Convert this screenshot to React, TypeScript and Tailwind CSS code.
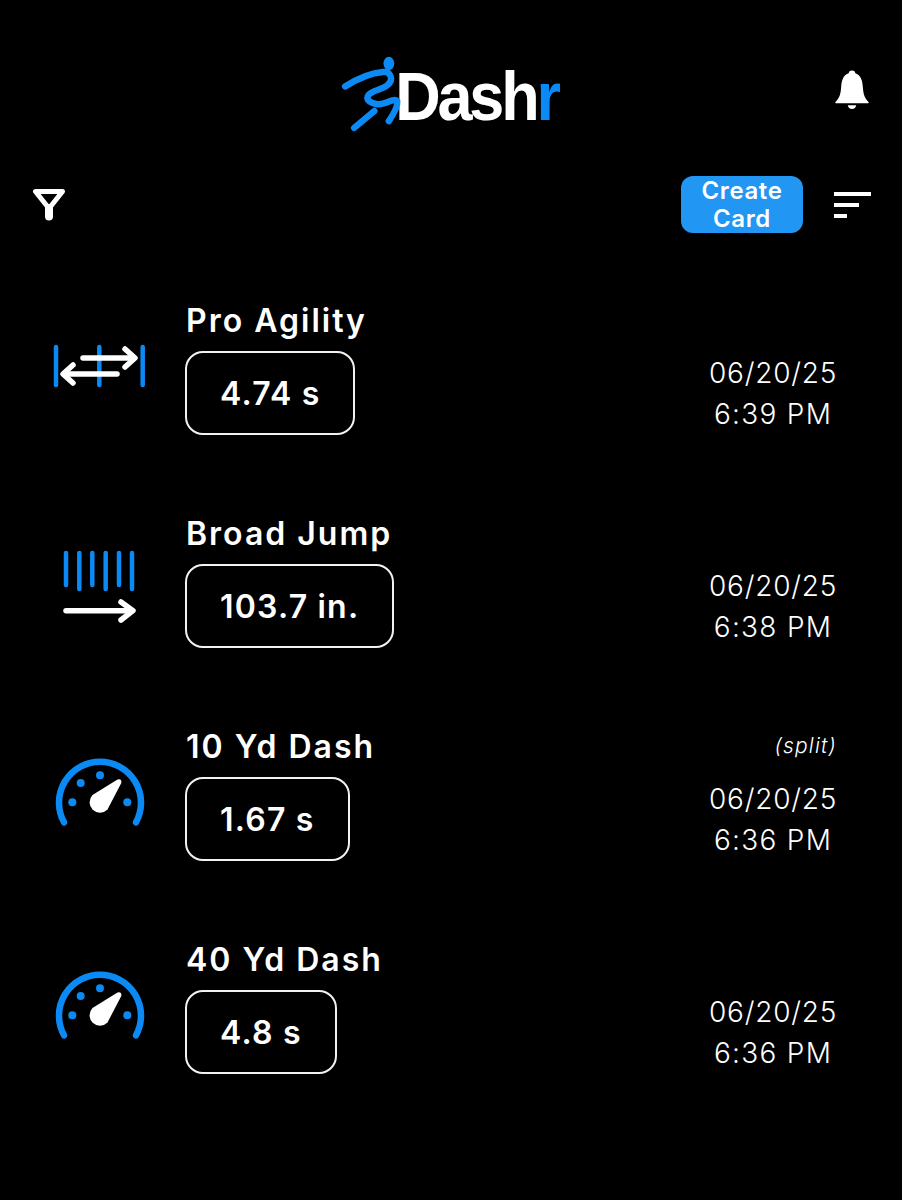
const inter = "font-['Inter',sans-serif]"

function AgilityIcon() {
  return (
    <svg width="96" height="96" viewBox="0 0 96 96" fill="none" strokeLinecap="round" strokeLinejoin="round">
      <g stroke="#0B8AF5" strokeWidth="4.5">
        <path d="M4 27V65" />
        <path d="M47.3 27V65" />
        <path d="M90.7 27V65" />
      </g>
      <g stroke="#fff" strokeWidth="5.5">
        <path d="M31 38H82" />
        <path d="M73 29L83 38L73 47" />
        <path d="M65 54H12" />
        <path d="M21 45L11 54L21 63" />
      </g>
    </svg>
  )
}

function JumpIcon() {
  return (
    <svg width="96" height="96" viewBox="0 0 96 96" fill="none" strokeLinecap="round" strokeLinejoin="round">
      <g stroke="#0B8AF5" strokeWidth="4.5">
        <path d="M14 20V52" />
        <path d="M27.3 20V56" />
        <path d="M40.3 20V52" />
        <path d="M53.7 20V56" />
        <path d="M67 20V52" />
        <path d="M80 20V56" />
      </g>
      <g stroke="#fff" strokeWidth="5.5">
        <path d="M14 77.7H80" />
        <path d="M69 69L81 77.7L69 87" />
      </g>
    </svg>
  )
}

function GaugeIcon() {
  return (
    <svg width="96" height="96" viewBox="0 0 96 96" fill="none">
      <path d="M12 76.3A41 41 0 1 1 84 76.3" stroke="#0B8AF5" strokeWidth="6.5" strokeLinecap="round" />
      <g fill="#0B8AF5">
        <circle cx="20.3" cy="56.3" r="4" />
        <circle cx="28.7" cy="37" r="4" />
        <circle cx="48" cy="29.3" r="4" />
        <circle cx="75.3" cy="56.3" r="4" />
      </g>
      <path d="M40.5 49L65.5 33.5Q70 32.5 69.3 37L55.5 63.5A10 10 0 0 1 40.5 49Z" fill="#fff" />
    </svg>
  )
}

function Logo() {
  return (
    <div className="flex items-center h-[76px] pr-[5px]">
      <svg width="64" height="76" viewBox="60 50 190 225" fill="none" stroke="#0B8AF5" strokeWidth="19" strokeLinecap="round" strokeLinejoin="round" className="relative z-10">
        <ellipse cx="208" cy="72" rx="16" ry="20" fill="#0B8AF5" stroke="none" />
        <path d="M78 140C110 120 150 100 190 97C215 95 222 120 205 135C190 150 160 150 148 165C138 178 150 190 175 193C200 195 222 172 233 184C235 200 220 225 208 243" />
        <path d="M105 263L165 213" />
      </svg>
      <span className="-ml-[8px] inline-block scale-y-[1.08] font-['Liberation_Sans',sans-serif] font-bold text-[63px] leading-none tracking-[-3.2px] text-white mt-[5px]">
        Dash<span className="text-[#0B8AF5]">r</span>
      </span>
    </div>
  )
}

function BellIcon() {
  return (
    <svg width="34" height="40" viewBox="0 0 36 42" fill="#fff" preserveAspectRatio="none">
      <circle cx="18" cy="4" r="3.5" />
      <path d="M18 3C9.5 3 7 10 6.5 18C6 25 5 29 .5 33.5C0 34.5 0.5 35 1.5 35H34.5C35.5 35 36 34.5 35.5 33.5C31 29 30 25 29.5 18C29 10 26.5 3 18 3Z" />
      <path d="M13.5 37H22.5C22 39.5 20.5 41 18 41C15.5 41 14 39.5 13.5 37Z" />
    </svg>
  )
}

function FilterIcon() {
  return (
    <svg width="34" height="34" viewBox="0 0 34 34" fill="none" stroke="#fff" strokeWidth="5" strokeLinejoin="round" strokeLinecap="round">
      <path d="M3.5 3.5H30.5L17 20.5Z" />
      <path d="M17 20V28.5" strokeWidth="8" />
    </svg>
  )
}

function SortIcon() {
  return (
    <div className="flex flex-col gap-[7px]">
      <div className="w-[37px] h-[4px] bg-white" />
      <div className="w-[25px] h-[4px] bg-white" />
      <div className="w-[13px] h-[4px] bg-white" />
    </div>
  )
}

type Result = {
  name: string
  value: string
  date: string
  time: string
  split?: boolean
  icon: React.ReactNode
}

const results: Result[] = [
  { name: 'Pro Agility', value: '4.74 s', date: '06/20/25', time: '6:39 PM', icon: <AgilityIcon /> },
  { name: 'Broad Jump', value: '103.7 in.', date: '06/20/25', time: '6:38 PM', icon: <JumpIcon /> },
  { name: '10 Yd Dash', value: '1.67 s', date: '06/20/25', time: '6:36 PM', split: true, icon: <GaugeIcon /> },
  { name: '40 Yd Dash', value: '4.8 s', date: '06/20/25', time: '6:36 PM', icon: <GaugeIcon /> },
]

function ResultRow({ result }: { result: Result }) {
  return (
    <div className="flex items-center pl-[52px] pr-[65px]">
      <div className="w-[96px] shrink-0">{result.icon}</div>
      <div className="ml-[37px] flex-1 flex flex-col items-start">
        <div className="h-[38px] pl-px text-[32px] leading-[40px] font-semibold tracking-[2px] text-white">{result.name}</div>
        <div className="mt-[12px] h-[84px] flex items-center pl-[33px] pr-[33px] pt-[2px] border-2 border-[#f2f2f2] rounded-[18px] text-[32px] font-semibold tracking-[1.2px] text-white">
          {result.value}
        </div>
      </div>
      <div className="flex flex-col items-end">
        <div className="h-[38px] leading-[38px] text-[21px] font-light italic tracking-[1.2px] text-white">
          {result.split ? '(split)' : ''}
        </div>
        <div className="mt-[12px] h-[84px] pt-[2px] flex flex-col justify-center text-center text-[28px] leading-[41px] font-light text-white">
          <div className="tracking-[0.75px]">{result.date}</div>
          <div className="tracking-[1.3px]">{result.time}</div>
        </div>
      </div>
    </div>
  )
}

export default function App() {
  return (
    <div className={`${inter} bg-black w-[902px] h-[1200px] overflow-hidden pt-[56px]`}>
      {/* Top: logo + bell */}
      <header className="grid grid-cols-[1fr_auto_1fr] items-start">
        <div />
        <Logo />
        <div className="flex justify-end pr-[33px] pt-[14px]">
          <BellIcon />
        </div>
      </header>

      {/* Toolbar */}
      <div className="mt-[44px] h-[57px] flex items-center pl-[32px] pr-[31px]">
        <FilterIcon />
        <button className="ml-auto w-[122px] h-[57px] rounded-[12px] bg-[#2196F3] text-white text-[24px] leading-[28px] font-semibold tracking-[0.6px]">
          Create
          <br />
          Card
        </button>
        <div className="ml-[31px]">
          <SortIcon />
        </div>
      </div>

      {/* Results */}
      <div className="mt-[68px] flex flex-col gap-[79px]">
        {results.map((r) => (
          <ResultRow key={r.name} result={r} />
        ))}
      </div>
    </div>
  )
}
